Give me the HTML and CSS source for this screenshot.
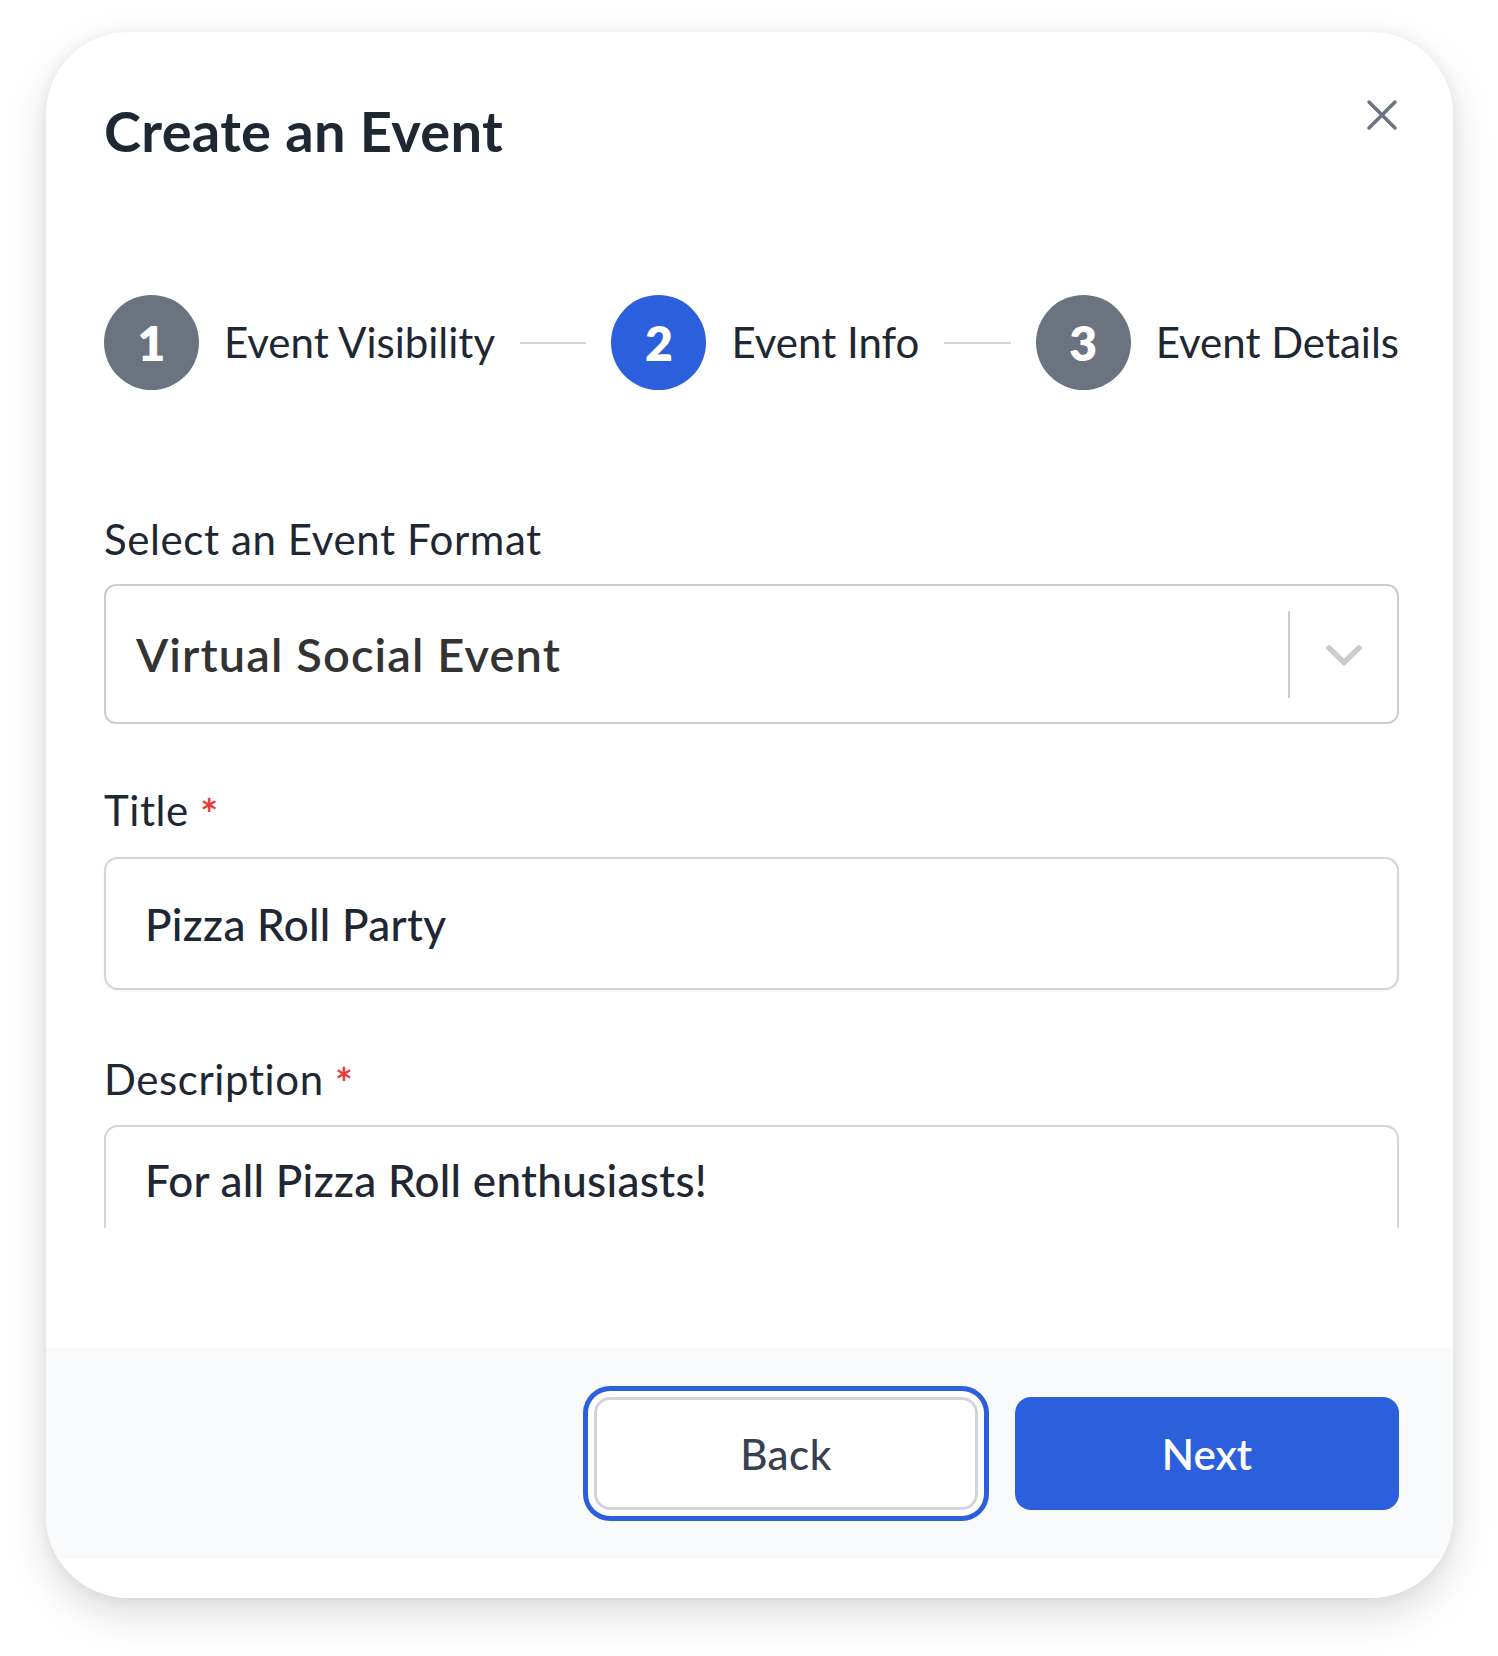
FILE: index.html
```html
<!DOCTYPE html>
<html lang="en">
<head>
<meta charset="utf-8">
<title>Create an Event</title>
<link rel="stylesheet" href="styles.css">
</head>
<body>
<div class="page">
  <div class="card">
    <div class="header">
      <h1 class="title">Create an Event</h1>
      <button class="close" aria-label="Close">
        <svg width="32" height="32" viewBox="0 0 32 32"><path d="M3 3 L29 29 M29 3 L3 29" stroke="#6b7280" stroke-width="3.5" stroke-linecap="round" fill="none"/></svg>
      </button>
    </div>
    <div class="scroll">
      <div class="steps">
        <div class="circle">1</div>
        <div class="step-label">Event Visibility</div>
        <div class="line"></div>
        <div class="circle active">2</div>
        <div class="step-label">Event Info</div>
        <div class="line"></div>
        <div class="circle">3</div>
        <div class="step-label">Event Details</div>
      </div>

      <div class="label label-first">Select an Event Format</div>
      <div class="select">
        <div class="select-value">Virtual Social Event</div>
        <div class="select-sep"></div>
        <div class="select-ind">
          <svg width="36" height="21" viewBox="0 0 36 21"><path d="M3 3 L18 17.5 L33 3" stroke="#cccccc" stroke-width="5.5" stroke-linecap="round" stroke-linejoin="round" fill="none"/></svg>
        </div>
      </div>

      <div class="label label-title">Title <span class="req">*</span></div>
      <div class="input">Pizza Roll Party</div>

      <div class="label label-desc">Description <span class="req">*</span></div>
      <div class="textarea">For all Pizza Roll enthusiasts!</div>
    </div>
    <div class="footer">
      <button class="btn btn-back">Back</button>
      <button class="btn btn-next">Next</button>
    </div>
  </div>
</div>
</body>
</html>
```

FILE: styles.css
```css
* { box-sizing: border-box; }
html, body { margin: 0; padding: 0; background: #ffffff; }
body {
  font-family: "Lato", "Open Sans", "Liberation Sans", sans-serif;
  color: #1f2937;
}
.page {
  padding: 32px 0 58px 46px;
}
.card {
  width: 1407px;
  height: 1566px;
  background: #ffffff;
  border-radius: 82px;
  box-shadow: 0 16px 40px rgba(0, 0, 0, 0.14), 0 0 14px rgba(0, 0, 0, 0.06);
  overflow: hidden;
  display: flex;
  flex-direction: column;
  padding-bottom: 39px;
}
.header {
  padding: 66px 55px 0 58px;
  display: flex;
  justify-content: space-between;
  align-items: flex-start;
  flex: none;
}
.title {
  margin: 0;
  font-size: 56px;
  line-height: 66px;
  font-weight: 700;
  letter-spacing: 0.3px;
  color: #1f2733;
}
.close {
  margin: 1px 0 0 0;
  padding: 0;
  border: 0;
  background: none;
  width: 32px;
  height: 32px;
  display: block;
}
.close svg { display: block; }
.scroll {
  flex: none;
  height: 1064px;
  overflow: hidden;
  padding: 0 54px 0 58px;
}
.steps {
  margin-top: 131px;
  display: flex;
  align-items: center;
  gap: 25px;
  height: 95px;
}
.circle {
  flex: none;
  width: 95px;
  height: 95px;
  border-radius: 50%;
  background: #6b7280;
  color: #ffffff;
  font-weight: 800;
  font-size: 48px;
  display: flex;
  align-items: center;
  justify-content: center;
  line-height: 1;
}
.circle.active { background: #2c5fdb; }
.step-label {
  flex: none;
  font-size: 42px;
  line-height: 49px;
  color: #1f2733;
  white-space: nowrap;
}
.line {
  flex: 1;
  height: 2px;
  background: #d1d5db;
}
.label {
  font-size: 42px;
  line-height: 49px;
  height: 49px;
  letter-spacing: 0.6px;
  color: #1f2733;
}
.label-first { margin-top: 125px; }
.label-title { margin-top: 62px; }
.label-desc { margin-top: 65px; }
.req {
  color: #e53e3e;
  font-weight: 700;
  line-height: 0;
  vertical-align: -4px;
}
.select {
  margin-top: 20px;
  height: 140px;
  border: 2px solid #cccccc;
  border-radius: 12px;
  display: flex;
  align-items: center;
  background: #ffffff;
}
.select-value {
  flex: 1;
  padding-left: 30px;
  font-size: 47px;
  line-height: 56px;
  font-weight: 600;
  letter-spacing: 1.1px;
  color: #333333;
}
.select-sep {
  flex: none;
  width: 2px;
  height: 87px;
  background: #cccccc;
}
.select-ind {
  flex: none;
  width: 107px;
  display: flex;
  justify-content: center;
  padding-top: 2px;
}
.select-ind svg { display: block; }
.input {
  margin-top: 22px;
  height: 133px;
  border: 2px solid #d1d5db;
  border-radius: 14px;
  padding: 0 39px;
  display: flex;
  align-items: center;
  font-size: 44px;
  line-height: 52px;
  font-weight: 500;
  letter-spacing: 0.3px;
  color: #1f2733;
  box-shadow: 0 1px 3px rgba(0, 0, 0, 0.05);
}
.textarea {
  margin-top: 21px;
  height: 220px;
  border: 2px solid #d1d5db;
  border-radius: 14px;
  padding: 27px 39px;
  font-size: 44px;
  line-height: 52px;
  font-weight: 500;
  letter-spacing: 0.3px;
  color: #1f2733;
}
.footer {
  flex: none;
  margin-top: 120px;
  height: 211px;
  background: #f9fafb;
  display: flex;
  justify-content: flex-end;
  align-items: center;
  gap: 37px;
  padding: 0 54px 0 58px;
}
.btn {
  width: 384px;
  height: 113px;
  border-radius: 16px;
  font-family: "Lato", "Open Sans", "Liberation Sans", sans-serif;
  font-size: 42px;
  padding: 0;
  cursor: pointer;
}
.btn-back {
  background: #ffffff;
  border: 3px solid #d1d5db;
  color: #374151;
  font-weight: 500;
  letter-spacing: 0.5px;
  box-shadow: 0 0 0 6px #ffffff, 0 0 0 11px #2c5fdb;
}
.btn-next {
  background: #2c5fdb;
  border: 0;
  color: #ffffff;
  font-weight: 600;
}
```
